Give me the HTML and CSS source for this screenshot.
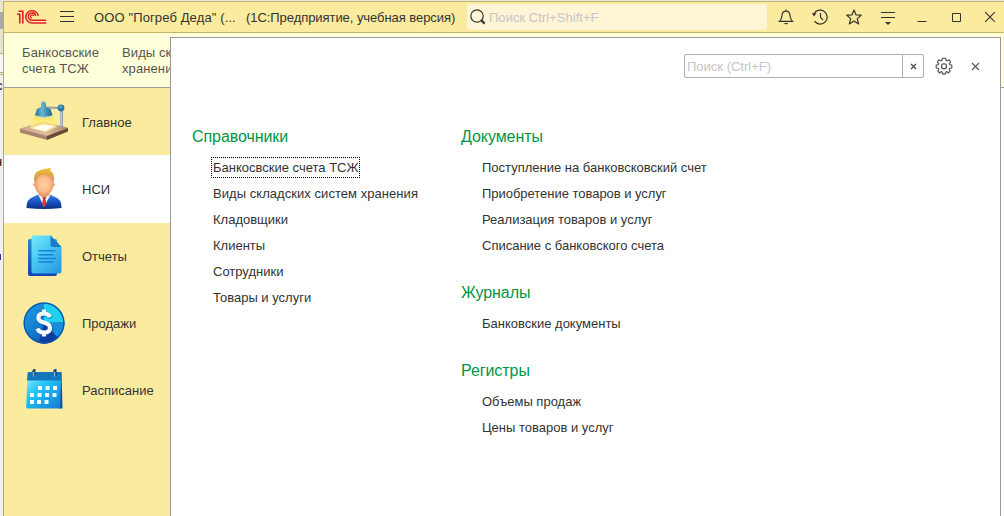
FILE: index.html
```html
<!DOCTYPE html>
<html lang="ru">
<head>
<meta charset="utf-8">
<title>1С:Предприятие</title>
<link rel="stylesheet" href="styles.css">
</head>
<body>
<div class="desktop">
  <div class="backdrop">
    <i class="bd-head"></i><i class="bd-grey"></i><i class="bd-light"></i><i class="bd-line"></i><i class="bd-white"></i><i class="bd-line"></i><i class="bd-gap"></i><i class="bd-line"></i>
    <span class="bd-text bd-a">с</span><span class="bd-text bd-b">н</span><i class="bd-mark"></i>
  </div>
  <div class="window">
    <header class="titlebar">
      <svg class="logo" width="30" height="16" viewBox="0 0 30 16" fill="none" stroke="#dc2127" stroke-width="1.5">
        <path d="M0 5.200H2.800V14.600M1.500 2.200H5.800V14.600" stroke-width="1.600"/>
        <path d="M21.300 6.800A6.300 6.100 0 1 0 15 14H29.200M18.700 6.800A3.700 3.700 0 1 0 15 11.300H29.200"/><path d="M16.800 7.200A1.700 1.700 0 1 0 15 9.200" stroke-width="1.200"/>
      </svg>
      <svg class="burger" width="14" height="12" viewBox="0 0 14 12" stroke="#333" stroke-width="1"><path d="M0 .5H14M0 5.5H14M0 10.5H14"/></svg>
      <span class="title">ООО "Погреб Деда" (...</span>
      <span class="subtitle">(1С:Предприятие, учебная версия)</span>
      <div class="search">
        <svg width="16" height="16" viewBox="0 0 16 16" fill="none" stroke="#333"><circle cx="7" cy="7" r="6.2" stroke-width="1.2"/><path d="M11 11L14.6 14.6" stroke-width="2.2"/></svg>
        <span>Поиск Ctrl+Shift+F</span>
      </div>
      <div class="tools">
        <svg width="16" height="16" viewBox="0 0 16 16" fill="none" stroke="#333" stroke-width="1.2"><path d="M1.5 12.4H14.5C12.8 10.8 12.3 9.5 12 6.5C11.8 3.8 10.3 2.2 8 2.2S4.2 3.8 4 6.5C3.7 9.5 3.2 10.8 1.5 12.4ZM8 .6V2.2"/><path d="M5.5 14H10.5L8 15.6Z" fill="#333" stroke="none"/></svg>
        <svg width="16" height="16" viewBox="0.5 0 16 16" fill="none" stroke="#333" stroke-width="1.2"><path d="M2.2 5.4A7 7 0 1 1 3 12.2M9 4V8.3L11.5 11"/><path d="M.3 4.3H5L2.5 7.4Z" fill="#333" stroke="none"/></svg>
        <svg width="16" height="16" viewBox="0 0 16 16" fill="none" stroke="#333" stroke-width="1.2" stroke-linejoin="round"><path d="M8 1L10.1 5.9L15.2 6.2L11.3 9.6L12.6 14.9L8 12.1L3.4 14.9L4.7 9.6L.8 6.2L5.9 5.9Z"/></svg>
        <svg width="16" height="16" viewBox="0 0 16 16" fill="none" stroke="#333"><path d="M1 3.5H15M1 8.5H15"/><path d="M5 13H11L8 16Z" fill="#333" stroke="none"/></svg>
        <svg width="16" height="16" viewBox="0 0 16 16" stroke="#333"><path d="M3.5 12.5H12.5"/></svg>
        <svg width="16" height="16" viewBox="0 0 16 16" fill="none" stroke="#333"><path d="M4.500 4.500H12.500V12.500H4.500Z"/></svg>
        <svg width="16" height="16" viewBox="0 0 16 16" stroke="#333" stroke-width="1.1"><path d="M3.2 3.2L12.8 12.8M12.8 3.2L3.2 12.8"/></svg>
      </div>
    </header>
    <div class="commands">
      <span class="cmd">Банкосвские<br>счета ТСЖ</span>
      <span class="cmd">Виды складских<br>хранения</span>
    </div>
    <main class="body">
      <nav class="sections">
        <a class="section">
          <svg width="50" height="42" viewBox="0 0 50 42">
            <defs>
              <linearGradient id="wood" x1="0" x2="1"><stop stop-color="#cfa98e"/><stop offset=".55" stop-color="#dfc0a0"/><stop offset="1" stop-color="#a88466"/></linearGradient>
              <linearGradient id="glow" x1="0" x2="0" y1="0" y2="1"><stop stop-color="#ffe23b"/><stop offset="1" stop-color="#fff9a8" stop-opacity=".8"/></linearGradient>
              <linearGradient id="shade" x1="0" x2="1"><stop stop-color="#1d6a98"/><stop offset=".4" stop-color="#6eb4d2"/><stop offset="1" stop-color="#17628e"/></linearGradient>
            </defs>
            <path d="M1 28L23 21L49 27L28 35Z" fill="url(#wood)" stroke="#b08f78" stroke-width=".5"/>
            <path d="M1 28L28 35V39L1 31.500Z" fill="#a98270"/><path d="M28 35L49 27V30.500L28 39Z" fill="#6b4a38"/>
            <path d="M16 13L11 27L27 31L38 26L33 13Z" fill="url(#glow)" opacity=".75"/>
            <path d="M13 27L24 23.500L36 25L26 30Z" fill="#fffef0"/>
            <path d="M27 6.500L42 7" stroke="#9a9da5" stroke-width="2"/><path d="M42.500 7V26" stroke="#8c98aa" stroke-width="2.800"/>
            <path d="M42.200 8V25" stroke="#d5dde8" stroke-width="1"/>
            <circle cx="42" cy="7" r="3.400" fill="#2a7ba6"/><circle cx="41.500" cy="6" r="1.200" fill="#79b9d2"/>
            <path d="M22 2L24.500 0L27 2V6L31.500 8L33.500 14.500Q25 18 16 14.500L18 8L22 6Z" fill="url(#shade)"/>
            <path d="M16 14Q25 17.500 33.500 14L32 15.500Q25 18 17.500 15.500Z" fill="#a9d5d8"/>
          </svg><span>Главное</span></a>
        <a class="section active">
          <svg width="50" height="42" viewBox="0 0 50 42">
            <defs>
              <radialGradient id="face"><stop stop-color="#ffd0a4"/><stop offset=".65" stop-color="#fbbd8b"/><stop offset="1" stop-color="#e59560"/></radialGradient>
              <linearGradient id="hair" x1="0" x2="0" y1="0" y2="1"><stop stop-color="#f0c547"/><stop offset="1" stop-color="#c08a24"/></linearGradient>
              <linearGradient id="suit" x1="0" x2="0" y1="0" y2="1"><stop stop-color="#3b81e5"/><stop offset=".6" stop-color="#174dbb"/><stop offset="1" stop-color="#062d7d"/></linearGradient>
            </defs>
            <path d="M7.500 40Q7 31 15 28.500L20 26H30L35 28.500Q43 31 42.500 40Q25 42 7.500 40Z" fill="url(#suit)"/>
            <path d="M19 26L25 39L32 26Z" fill="#eef3fb"/><path d="M23 28.500H27.500L26.500 31L27.500 36L25.300 39L23 36L24 31Z" fill="#e6332f"/>
            <path d="M20 22H30.500V27Q25 31 20 27Z" fill="#e99865"/>
            <path d="M15.500 13Q16 5 25 5T34.500 13L34 20Q31 27.500 25 27.500T16 20Z" fill="url(#face)"/>
            <circle cx="15.500" cy="16.500" r="1.500" fill="#f2a36e"/><circle cx="34.500" cy="16.500" r="1.500" fill="#f2a36e"/>
            <path d="M15.300 14.500Q14 5.500 19 3Q24 .7 32 0L31.500 3Q36 5 34.700 14.500L33 8Q31 6 26 6.500T17.500 7.500Z" fill="url(#hair)"/>
          </svg><span>НСИ</span></a>
        <a class="section">
          <svg width="50" height="42" viewBox="0 0 50 42">
            <defs><linearGradient id="sheet" x1="0" x2=".8" y1="0" y2="1"><stop stop-color="#79e9ff"/><stop offset=".45" stop-color="#4acaf3"/><stop offset="1" stop-color="#2a9ce6"/></linearGradient>
            <linearGradient id="back" x1="0" x2="0" y1="0" y2="1"><stop stop-color="#268bd0"/><stop offset="1" stop-color="#1144b1"/></linearGradient></defs>
            <rect x="9" y="4" width="29" height="37" rx="2" fill="url(#back)"/>
            <path d="M14 .5H32L42.5 12V36.5Q42.5 38.5 40.5 38.5H14.5Q12.5 38.5 12.5 36.5V2.5Q12.5 .5 14 .5Z" fill="url(#sheet)"/>
            <path d="M31.5 .5L42.5 12H34Q31.5 12 31.5 9.5Z" fill="#1979cb"/>
            <path d="M20 15.8H36M20 19.7H34M20 23.4H36M20 27H34" stroke="#1680d1" stroke-width="1.5" stroke-linecap="round"/>
          </svg><span>Отчеты</span></a>
        <a class="section">
          <svg width="50" height="42" viewBox="0 0 50 42">
            <defs><linearGradient id="coin" x1="0" x2="1" y1="0" y2="1"><stop stop-color="#21a0e6"/><stop offset=".5" stop-color="#1479ca"/><stop offset="1" stop-color="#083699"/></linearGradient></defs>
            <circle cx="25" cy="21" r="20.5" fill="url(#coin)"/>
            <path d="M25 21V.5A20.5 20.5 0 0 1 45.5 20Z" fill="#20d1ee"/><path d="M25 21L45.5 20A20.5 20.5 0 0 1 39 36Z" fill="#178edb"/><path d="M25 21L39 36A20.5 20.5 0 0 1 20 41Z" fill="#0d3ca2"/>
            <circle cx="25" cy="21" r="19.8" fill="none" stroke="#0a55a8" stroke-width="1.2"/>
            <path d="M31 15Q29.500 11.500 25 11.500Q19.500 11.500 19.500 15.700Q19.500 19.300 25 20.500Q31 22 31 26Q31 30.500 25 30.500Q20 30.500 18.500 26.500M25 7.500V12M25 30V34.500" fill="none" stroke="#063b8d" stroke-width="4.600" opacity=".35" transform="translate(1 1)"/>
            <path d="M31 15Q29.500 11.500 25 11.500Q19.500 11.500 19.500 15.700Q19.500 19.300 25 20.500Q31 22 31 26Q31 30.500 25 30.500Q20 30.500 18.500 26.500M25 7.500V12M25 30V34.500" fill="none" stroke="#f4f8fb" stroke-width="4.200"/>
          </svg><span>Продажи</span></a>
        <a class="section">
          <svg width="50" height="42" viewBox="0 0 50 42">
            <defs><linearGradient id="cal" x1="0" x2="1" y1="0" y2="1"><stop stop-color="#7feaff"/><stop offset=".35" stop-color="#20c4f3"/><stop offset="1" stop-color="#1578d7"/></linearGradient></defs>
            <path d="M9.5 3H42.5L43.5 39.5H40Z" fill="#0b55a8"/>
            <path d="M8.5 10H42L41 39.5H8.500Q7 39.5 7.200 37Z" fill="url(#cal)"/>
            <path d="M10 3H41Q42.5 3 42.5 5L42 11.5H8L8.5 5Q8.6 3 10 3Z" fill="#1576bd"/>
            <path d="M15 7V3Q15 1.500 16.500 1.500M36 7V3Q36 1.500 37.500 1.500" fill="none" stroke="#174975" stroke-width="3.600"/>
            <path d="M14.500 7.500V3M35.500 7.500V3" stroke="#62c4e8" stroke-width="1.600"/>
            <path d="M19 17h4v4h-4zM26.500 17h4v4h-4zM34 17h4v4h-4zM11 24h4v4h-4zM18.500 24h4v4h-4zM26 24h4v4h-4zM33.500 24h4v4h-4zM11 31h4v4h-4zM18 31h4v4h-4zM25.500 31h4v4h-4z" fill="#f5fbff"/>
          </svg><span>Расписание</span></a>
      </nav>
    </main>
    <section class="menu">
      <div class="menu-bar">
        <div class="filter"><span>Поиск (Ctrl+F)</span><b><svg width="7" height="7" viewBox="0 0 7 7" stroke="#444" stroke-width="1.1"><path d="M1 1L6 6M6 1L1 6"/></svg></b></div>
        <svg class="gear" width="18" height="18" viewBox="0 0 18 18" fill="none" stroke="#4a4a4a" stroke-width="1.1" stroke-linejoin="round"><path d="M7.300 1.300H10.700L11 3.400L12.200 3.900L14 2.800L15.700 5L14.400 6.700L14.800 7.700L16.800 8V11L14.700 11.300L14.200 12.500L15.200 14.200L13.300 16L11.900 14.600L10.800 15L10.500 16.900H7.500L7.200 15L6.100 14.600L4.700 16L2.800 14.200L3.800 12.500L3.300 11.300L1.200 11V8L3.200 7.700L3.600 6.700L2.300 5L4 2.800L5.800 3.900L7 3.400Z"/><circle cx="9" cy="9.300" r="2.600"/></svg>
        <svg class="close" width="9" height="9" viewBox="0 0 9 9" stroke="#555" stroke-width="1.1"><path d="M1 1L8 8M8 1L1 8"/></svg>
      </div>
      <div class="columns">
        <div class="column">
          <div class="group"><h2>Справочники</h2>
            <a><span class="focused">Банкосвские счета ТСЖ</span></a><a class="loose">Виды складских систем хранения</a><a>Кладовщики</a><a>Клиенты</a><a>Сотрудники</a><a>Товары и услуги</a></div>
        </div>
        <div class="column">
          <div class="group"><h2>Документы</h2>
            <a>Поступление на банковсковский счет</a><a class="tight">Приобретение товаров и услуг</a><a>Реализация товаров и услуг</a><a>Списание с банковского счета</a></div>
          <div class="group"><h2>Журналы</h2><a>Банковские документы</a></div>
          <div class="group"><h2>Регистры</h2><a>Объемы продаж</a><a>Цены товаров и услуг</a></div>
        </div>
      </div>
    </section>
  </div>
</div>
</body>
</html>
```
FILE: styles.css
```css
* { box-sizing: border-box; }
body { margin: 0; font: 13px/16px "Liberation Sans", Arial, sans-serif; color: #333; overflow: hidden; }
svg { display: block; flex: none; }
.desktop { display: flex; width: 1004px; height: 516px; background: #e6e4dc; padding-top: 1px; overflow: hidden; }
.backdrop { position: relative; width: 3px; flex: none; display: flex; flex-direction: column; background: #f0f0f0; overflow: hidden; }
.backdrop i { display: block; flex: none; }
.bd-head { height: 11px; background: #e9e6d0; }
.bd-grey { height: 17px; background: #aaa; }
.bd-light { height: 24px; background: #e7e4cd; }
.bd-line { height: 1px; background: #b9b48f; }
.bd-white { height: 18px; background: #f5f5f5; }
.bd-gap { height: 1px; background: #e7e4cd; }
.bd-text { position: absolute; left: -4px; color: #111; }
.bd-a { top: 77px; }
.bd-b { left: -5px; top: 153px; }
.backdrop .bd-mark { position: absolute; left: 0; top: 253px; width: 1px; height: 6px; background: #35358c; }
.window { position: relative; flex: 1; display: flex; flex-direction: column; border-left: 1px solid #b3aa7c; border-top: 1px solid #c4b56c; background: #fff; }
.titlebar { display: flex; align-items: center; height: 31px; flex: none; background: #faeb9e; border-bottom: 1px solid #c3b468; padding-left: 13px; white-space: nowrap; }
.titlebar span { padding-top: 2px; }
.burger { margin-left: 13px; }
.title { width: 152px; margin-left: 20px; letter-spacing: .12px; }
.subtitle { width: 0; letter-spacing: -.06px; }
.search { display: flex; align-items: center; gap: 4px; width: 300px; height: 26px; margin-left: 221px; padding-left: 3px; background: #fdf5d6; border-radius: 3px; color: #c8c4c8; }
.search span { margin-left: -1px; letter-spacing: .03px; }
.tools { display: flex; gap: 18px; margin-left: 11px; }
.commands { display: flex; height: 55px; flex: none; padding: 12px 0 0 18px; background: #ffffd9; border-bottom: 1px solid #a0a0a0; color: #555; white-space: nowrap; letter-spacing: .1px; }
.cmd { width: 100px; }
.body { flex: 1; display: flex; background: #fff; }
.sections { width: 166px; background: #faeb9e; }
.section { display: flex; align-items: center; gap: 13px; height: 67px; padding-left: 15px; }
.section span { padding-top: 2px; }
.section.active { background: #fff; height: 68px; margin-bottom: -1px; }
.menu { position: absolute; left: 166px; top: 35px; width: 831px; height: 490px; background: #fff; border: 1px solid #999; }
.menu-bar { display: flex; align-items: center; height: 24px; margin: 16px 0 0 513px; }
.filter { display: flex; width: 240px; height: 24px; border: 1px solid #b0b0b0; border-radius: 2px; color: #c6c4c8; line-height: 22px; padding-left: 2px; }
.filter span { flex: 1; padding-top: 1px; }
.filter b { display: flex; align-items: center; justify-content: center; width: 21px; border-left: 1px solid #b0b0b0; }
.gear { margin-left: 11px; }
.close { margin-left: 18px; }
.columns { display: flex; padding: 41px 0 0 21px; }
.column { width: 269px; display: flex; flex-direction: column; gap: 16px; }
.group { display: flex; flex-direction: column; white-space: nowrap; }
h2 { margin: 0; font-size: 16px; font-weight: 400; line-height: 36px; height: 36px; color: #009646; letter-spacing: -.07px; }
.group a { height: 26px; line-height: 26px; padding-left: 21px; }
.group .loose { letter-spacing: .05px; }
.group .tight { letter-spacing: -.03px; }
.focused { outline: 1px dotted #000; outline-offset: 1px; display: inline-block; line-height: 16px; padding-top: 1px; }
```
